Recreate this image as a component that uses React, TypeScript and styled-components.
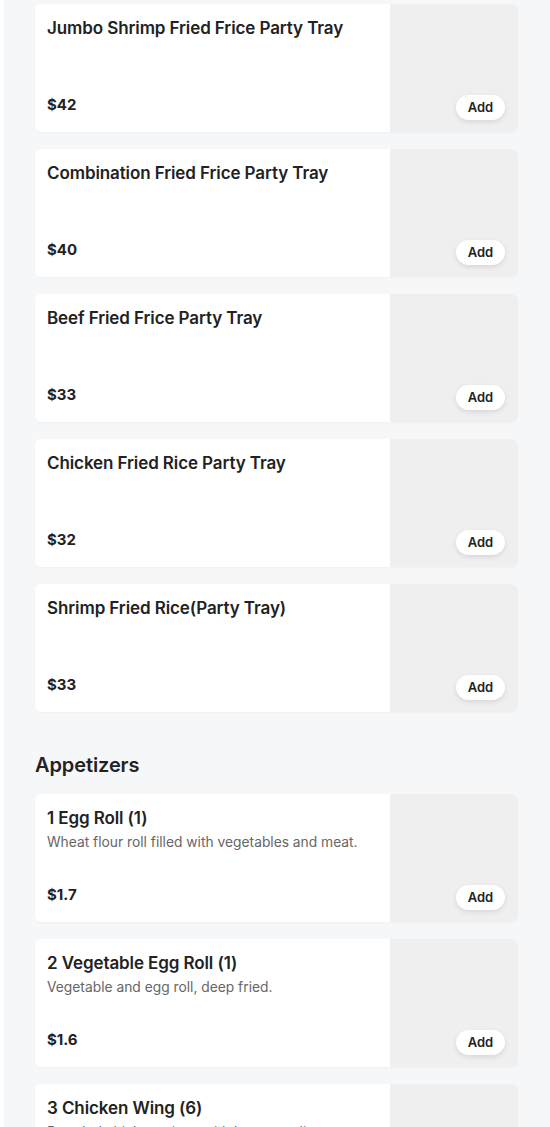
import React from "react";
import styled, { createGlobalStyle } from "styled-components";

const Global = createGlobalStyle`
  html, body { margin: 0; padding: 0; background: #ffffff; }
  body { font-family: Inter, "Noto Sans", sans-serif; color: #222; }
`;

const Page = styled.div`
  margin-left: 4px;
  background: #f6f7f9;
  padding: 4px 32px 20px 31px;
  min-height: 1127px;
  box-sizing: border-box;
`;

const List = styled.div`
  display: flex;
  flex-direction: column;
  gap: 17px;
`;

const Section = styled.section<{ $gapTop?: boolean }>`
  margin-top: ${(p) => (p.$gapTop ? "40px" : "0")};
`;

const SectionTitle = styled.h2`
  margin: 0 0 16px;
  font-size: 20px;
  line-height: 26px;
  font-weight: 600;
  letter-spacing: -0.1px;
  color: #222;
`;

const Card = styled.div`
  display: flex;
  height: 128px;
  background: #fff;
  border-radius: 6px;
  overflow: hidden;
  box-shadow: 0 1px 2px rgba(0, 0, 0, 0.03);
`;

const Info = styled.div`
  flex: 1;
  display: flex;
  flex-direction: column;
  padding: 12px 12px 17px 12px;
  min-width: 0;
`;

const Title = styled.div`
  font-size: 17px;
  line-height: 24px;
  font-weight: 600;
  letter-spacing: -0.1px;
  color: #222;
`;

const Desc = styled.div`
  font-size: 13.8px;
  line-height: 24px;
  font-weight: 400;
  color: #666;
  white-space: nowrap;
  overflow: hidden;
  text-overflow: ellipsis;
`;

const Price = styled.div`
  margin-top: auto;
  font-size: 15px;
  line-height: 20px;
  font-weight: 700;
  color: #222;
`;

const Thumb = styled.div`
  position: relative;
  width: 128px;
  flex: none;
  background: #efefef;
  border-radius: 0 6px 6px 0;
`;

const AddButton = styled.button`
  position: absolute;
  right: 13px;
  bottom: 12px;
  width: 49px;
  height: 25px;
  border: none;
  border-radius: 13px;
  background: #fff;
  box-shadow: 0 2px 5px rgba(0, 0, 0, 0.1);
  font-family: Inter, "Noto Sans", sans-serif;
  font-size: 13px;
  line-height: 25px;
  font-weight: 600;
  color: #222;
  padding: 0 0 2px;
  cursor: pointer;
`;

type Item = { name: string; price: string; desc?: string };

const trays: Item[] = [
  { name: "Jumbo Shrimp Fried Frice Party Tray", price: "$42" },
  { name: "Combination Fried Frice Party Tray", price: "$40" },
  { name: "Beef Fried Frice Party Tray", price: "$33" },
  { name: "Chicken Fried Rice Party Tray", price: "$32" },
  { name: "Shrimp Fried Rice(Party Tray)", price: "$33" },
];

const appetizers: Item[] = [
  { name: "1 Egg Roll (1)", price: "$1.7", desc: "Wheat flour roll filled with vegetables and meat." },
  { name: "2 Vegetable Egg Roll (1)", price: "$1.6", desc: "Vegetable and egg roll, deep fried." },
  { name: "3 Chicken Wing (6)", price: "$6.5", desc: "Breaded chicken wings with honey garlic sauce on the side." },
];

const MenuCard = ({ item }: { item: Item }) => (
  <Card>
    <Info>
      <Title>{item.name}</Title>
      {item.desc && <Desc>{item.desc}</Desc>}
      <Price>{item.price}</Price>
    </Info>
    <Thumb>
      <AddButton>Add</AddButton>
    </Thumb>
  </Card>
);

export default function App() {
  return (
    <>
      <Global />
      <Page>
        <Section>
          <List>
            {trays.map((t) => (
              <MenuCard key={t.name} item={t} />
            ))}
          </List>
        </Section>
        <Section $gapTop>
          <SectionTitle>Appetizers</SectionTitle>
          <List>
            {appetizers.map((t) => (
              <MenuCard key={t.name} item={t} />
            ))}
          </List>
        </Section>
      </Page>
    </>
  );
}
